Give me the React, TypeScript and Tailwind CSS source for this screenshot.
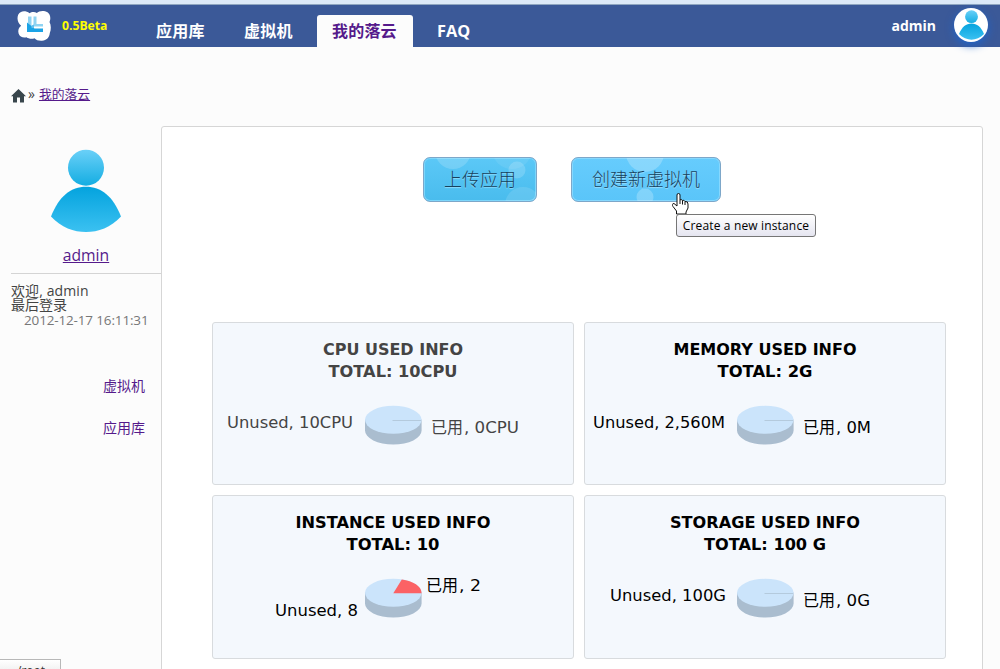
import React from "react";

function Person({ id, className }: { id: string; className: string }) {
  return (
    <svg className={className} viewBox="0 0 70 84">
      <defs>
        <linearGradient id={id + "h"} x1="0" y1="0" x2="0" y2="1">
          <stop offset="0" stopColor="#6ad0f8" />
          <stop offset="1" stopColor="#14ade2" />
        </linearGradient>
        <linearGradient id={id + "b"} x1="0" y1="0" x2="0" y2="1">
          <stop offset="0" stopColor="#04a3de" />
          <stop offset="1" stopColor="#3bc1f1" />
        </linearGradient>
      </defs>
      <circle cx="35" cy="18.7" r="18" fill={`url(#${id}h)`} />
      <path d="M0 67.500C8 47 20 37.700 35 37.700C50 37.700 62 47 70 67.500C60 78.500 47 83 35 83C23 83 10 78.500 0 67.500Z" fill={`url(#${id}b)`} />
    </svg>
  );
}

function Logo() {
  return (
    <svg className="h-[32px] w-[36px] shrink-0" viewBox="0 0 36 32">
      <path
        d="M5 2C7 .8 11 1.200 13.500 3.200C15.500 1.600 19 1.600 20.800 3C23 .8 28 .2 31.500 2.300C34.600 4.500 35 9 33.500 12C35.200 15 35.200 20 33.800 23C33.500 27.500 30.500 30.500 26 30.700C22.500 30.900 20 30 18.500 28.200C16 29.300 12.500 28.800 10.500 27.300C7 28.300 3.500 26.500 2.600 23.500C1.700 20.500 2.700 17.500 5.200 15.800C2.800 13.800 1.600 11.500 1.500 8.500C1.500 5.500 2.500 3.200 5 2Z"
        fill="#fff"
      />
      <path d="M12 6.500h3.500v10h-3.500z" fill="#8fd3f2" />
      <path d="M17.500 6.500h3v9h-3zM17.500 14h9.500v2.500h-9.500z" fill="#8fd3f2" />
      <path d="M11 12.500L18.500 18.500H27V22H11z" fill="#1ba3e6" />
      <path d="M15.500 15.500L18 14.500V18H15.500z" fill="#5fc0ee" />
    </svg>
  );
}

type ChartProps = {
  title: string;
  tw: number;
  total: string;
  sw: number;
  unused: string;
  ux: number;
  uw: number;
  uy: number;
  value: string;
  vx: number;
  vw: number;
  vy: number;
  wedge?: boolean;
  muted?: boolean;
};

function Chart(p: ChartProps) {
  const ink = p.muted ? "#444" : "#000";
  return (
    <div className="h-full overflow-hidden rounded-[3px] border border-[#d8dbde] bg-[#f4f8fd]">
      <svg className="-ml-px -mt-px block h-[162px] w-[362px]" viewBox="0 0 362 162" fontSize="16" fontFamily="'DejaVu Sans', 'Noto Sans CJK SC', sans-serif" fill={ink}>
        <g fontWeight="bold" textAnchor="middle">
          <text x="181" y="33" textLength={p.tw} lengthAdjust="spacingAndGlyphs">{p.title}</text>
          <text x="181" y="55" textLength={p.sw} lengthAdjust="spacingAndGlyphs">{p.total}</text>
        </g>
        <text x={p.ux} y={p.uy} textLength={p.uw} lengthAdjust="spacingAndGlyphs">{p.unused}</text>
        <text x={p.vx - 1} y={p.vy} fontFamily="'Noto Sans CJK SC', sans-serif">已用</text>
        <text x={p.vx + 32} y={p.vy} textLength={p.vw} lengthAdjust="spacingAndGlyphs">{p.value}</text>
        <path d="M153 97.500V108.500A28.300 14 0 0 0 209.600 108.500V97.500Z" fill="#aabdcf" />
        <ellipse cx="181.300" cy="97.800" rx="28.300" ry="14" fill="#cbe4fb" />
        {p.wedge ? (
          <path d="M181.300 98.300L189.800 84.400C201 86 209.600 91 209.600 98.300Z" fill="#fb6265" />
        ) : (
          <path d="M180.500 98.500H209" stroke="#b4cadd" strokeWidth="1" />
        )}
      </svg>
    </div>
  );
}

const charts: ChartProps[] = [
  { title: "CPU USED INFO", tw: 140, total: "TOTAL: 10CPU", sw: 129, unused: "Unused, 10CPU", ux: 15, uw: 126, uy: 106, value: ", 0CPU", vx: 220, vw: 55, vy: 111, muted: true },
  { title: "MEMORY USED INFO", tw: 183, total: "TOTAL: 2G", sw: 95, unused: "Unused, 2,560M", ux: 9, uw: 132, uy: 106, value: ", 0M", vx: 220, vw: 35, vy: 111 },
  { title: "INSTANCE USED INFO", tw: 195, total: "TOTAL: 10", sw: 93, unused: "Unused, 8", ux: 63, uw: 83, uy: 121, value: ", 2", vx: 215, vw: 22, vy: 96, wedge: true },
  { title: "STORAGE USED INFO", tw: 190, total: "TOTAL: 100 G", sw: 122, unused: "Unused, 100G", ux: 26, uw: 116, uy: 106, value: ", 0G", vx: 220, vw: 34, vy: 111 },
];

export default function App() {
  return (
    <div className="relative flex h-[669px] w-[1000px] flex-col overflow-hidden bg-[#fcfcfc] font-['Open_Sans','Noto_Sans_CJK_SC',sans-serif] whitespace-nowrap text-[#444]">
      <div className="h-[5px] shrink-0 border-b border-[#8fa6c0] bg-[#dce9f8]" />
      <header className="flex h-[42px] shrink-0 bg-[#3b5998] text-white">
        <div className="flex w-[141px] items-center pl-[16px]">
          <Logo />
          <span className="mt-px ml-[10px] text-[12.2px] font-bold text-[#ffff00]">0.5Beta</span>
        </div>
        <nav className="flex items-end text-[16px] leading-8 font-bold">
          <a className="w-[88px] pl-[15px] tracking-[0.2px]">应用库</a>
          <a className="w-[88px] pl-[15px] tracking-[0.2px]">虚拟机</a>
          <a className="h-8 w-[96px] rounded-t-[3px] bg-[#fcfcfc] pl-[15px] tracking-[0.2px] text-[#551a8b]">我的落云</a>
          <a className="pl-[24px] text-[16.3px]">FAQ</a>
        </nav>
        <div className="ml-auto flex items-center pr-[12px] text-[14px] font-bold">
          <span className="-mt-[2px]">admin</span>
          <span className="ml-[18px] -mt-[2px] flex h-[34px] w-[34px] justify-center rounded-full bg-white pt-[2px] shadow-[0_3px_9px_#1e63c8]">
            <Person id="s" className="h-[30px] w-[25px]" />
          </span>
        </div>
      </header>
      <div className="flex h-[79px] shrink-0 items-start pt-[39px] pl-[11px] text-[13px] leading-4">
        <svg className="mt-[3px] h-[14px] w-[15px]" viewBox="0 0 15 14">
          <path d="M7.500 0L15 7.300H13V13.500H9V8.500H6V13.500H2V7.300H0Z" fill="#39464c" />
        </svg>
        <span className="mr-[4px] ml-[2px] text-[14px]">»</span>
        <a className="text-[12.8px] text-[#551a8b] underline">我的落云</a>
      </div>
      <div className="flex min-h-0 flex-1">
        <aside className="flex w-[161px] shrink-0 flex-col pl-[11px]">
          <div className="flex h-[148px] flex-col items-center border-b border-[#d4d4d4] pt-[23px]">
            <Person id="l" className="h-[84px] w-[70px]" />
            <a className="mt-[11px] text-[15.7px] leading-[22px] text-[#551a8b] underline">admin</a>
          </div>
          <div className="mt-[10px] text-[14px] leading-[14px]">
            <div className="tracking-[0.1px]">欢迎, admin</div>
            <div>最后登录</div>
            <div className="mt-px pl-[13px] text-[13.5px] tracking-[-0.15px] text-[#777]">2012-12-17 16:11:31</div>
          </div>
          <nav className="mt-[38px] flex flex-col items-end pr-[16px] text-[14px] leading-[42px] text-[#551a8b]">
            <a>虚拟机</a>
            <a>应用库</a>
          </nav>
        </aside>
        <main className="flex h-[560px] w-[822px] flex-col rounded-[3px] border border-[#d6d6d6] bg-white pt-[30px] pl-[50px]">
          <div className="ml-[211px] flex h-[45px] gap-[34px] text-[18px] font-light text-[#17415c]">
            <button className="relative flex w-[114px] items-center justify-center overflow-hidden rounded-[7px] border border-[#7da7c9] bg-linear-to-b from-[#5bc8f7] to-[#49bced] shadow-[inset_0_0_0_1px_#7cd6fb]">
              <svg className="absolute inset-0" width="112" height="43" viewBox="0 0 112 43" fill="#fff" fillOpacity=".17">
                <circle cx="29" cy="-7" r="18" />
                <circle cx="93" cy="12" r="8.500" />
                <circle cx="88" cy="-9" r="20" fillOpacity=".08" />
                <circle cx="99" cy="47" r="18" fillOpacity=".12" />
              </svg>
              <span className="relative [text-shadow:0_1px_1px_#8fdcfd]">上传应用</span>
            </button>
            <button className="relative flex w-[150px] items-center justify-center overflow-hidden rounded-[7px] border border-[#7da7c9] bg-linear-to-b from-[#66ccfd] to-[#5ac5f9] shadow-[inset_0_0_0_1px_#86d8fe]">
              <svg className="absolute inset-0" width="148" height="43" viewBox="0 0 148 43" fill="#fff" fillOpacity=".23">
                <circle cx="73" cy="-5" r="19" />
                <circle cx="73" cy="39" r="8.500" />
              </svg>
              <span className="relative [text-shadow:0_1px_1px_#a3e2fe]">创建新虚拟机</span>
            </button>
          </div>
          <div className="mt-[120px] grid w-[734px] grid-cols-[362px_362px] grid-rows-[163px_164px] gap-[10px]">
            {charts.map((c) => <Chart key={c.title} {...c} />)}
          </div>
        </main>
      </div>
      <svg className="absolute top-[193px] left-[672px]" width="18" height="22" viewBox="0 0 18 22">
        <path d="M4.500 21V18L1 13.500C0 12 0 10.500 2 10.500L5 13V2Q5 .5 6.500 .5Q8 .5 8 2V7Q9 5.500 10.500 7.500Q12 6.500 13 8.500Q16 8 16 11V15L14 19V21Z" fill="#fff" stroke="#111" />
        <path d="M8 7V11M10.500 7.500V11.500M13 8.500V12" stroke="#111" />
      </svg>
      <div className="absolute top-[214px] left-[676px] flex h-[23px] w-[140px] items-center justify-center rounded-[3px] border border-[#767676] bg-linear-to-b from-white to-[#e5e5f0] text-[12px] tracking-[0.15px] text-black">Create a new instance</div>
      <div className="absolute top-[659px] left-[-1px] h-[20px] w-[62px] border border-[#b8b8b8] bg-linear-to-b from-white to-[#e8e8e8] pl-[17px] text-[12px] leading-[21px] text-[#333]">/root</div>
    </div>
  );
}
